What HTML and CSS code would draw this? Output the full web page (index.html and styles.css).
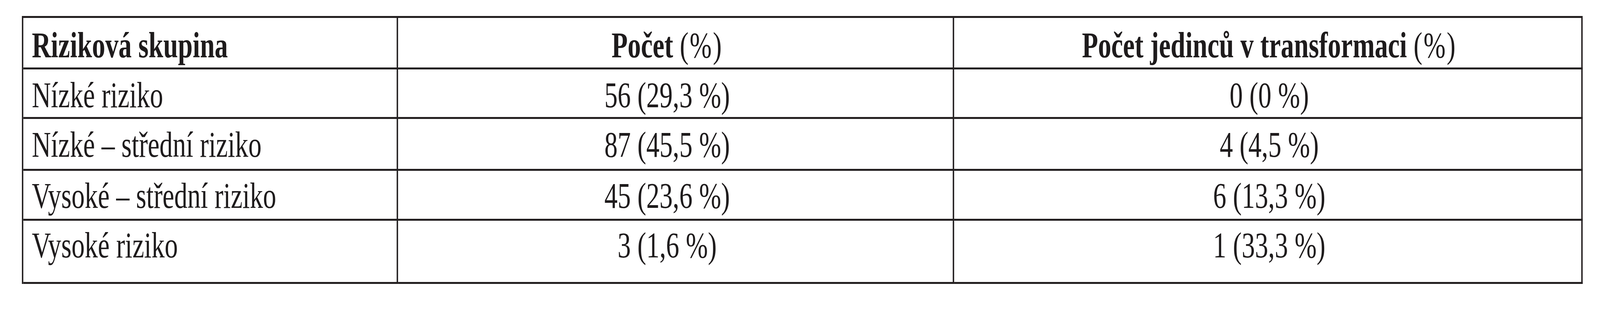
FILE: index.html
```html
<!DOCTYPE html>
<html lang="cs">
<head>
<meta charset="utf-8">
<title>Riziková skupina</title>
<link rel="stylesheet" href="styles.css">
</head>
<body>
<div class="page">
  <div class="risk-table" role="table">
    <div class="row head" role="row">
      <div class="cell c1" role="columnheader">Riziková skupina</div>
      <div class="cell c2" role="columnheader">Počet <span class="unit">(%)</span></div>
      <div class="cell c3" role="columnheader">Počet jedinců v transformaci <span class="unit">(%)</span></div>
    </div>
    <div class="row" role="row">
      <div class="cell c1" role="cell">Nízké riziko</div>
      <div class="cell c2" role="cell">56 (29,3 %)</div>
      <div class="cell c3" role="cell">0 (0 %)</div>
    </div>
    <div class="row" role="row">
      <div class="cell c1" role="cell">Nízké – střední riziko</div>
      <div class="cell c2" role="cell">87 (45,5 %)</div>
      <div class="cell c3" role="cell">4 (4,5 %)</div>
    </div>
    <div class="row" role="row">
      <div class="cell c1" role="cell">Vysoké – střední riziko</div>
      <div class="cell c2" role="cell">45 (23,6 %)</div>
      <div class="cell c3" role="cell">6 (13,3 %)</div>
    </div>
    <div class="row" role="row">
      <div class="cell c1" role="cell">Vysoké riziko</div>
      <div class="cell c2" role="cell">3 (1,6 %)</div>
      <div class="cell c3" role="cell">1 (33,3 %)</div>
    </div>
  </div>
</div>
</body>
</html>
```
FILE: styles.css
```css
html, body {
  margin: 0;
  padding: 0;
  background: #ffffff;
  overflow: hidden;
}

body {
  font-family: "Liberation Serif", "Times New Roman", serif;
  font-size: 93px;
  line-height: 93px;
  color: #1e1b1c;
}

/* The window is clamped to 4096px wide: the 5631px-wide design is fitted horizontally. */
.page {
  width: 5631px;
  height: 800px;
  padding-top: 41px;
  box-sizing: border-box;
  transform: scaleX(0.727402);
  transform-origin: 0 0;
}

.risk-table {
  display: grid;
  grid-template-columns: 1319px 1957px 2212px;
  grid-template-rows: 132px 127px 133px 128px 162px;
  width: max-content;
  margin-left: 77px;
  border-top: 5px solid #231f20;
  border-left: 5px solid #231f20;
}

.row {
  display: contents;
}

.cell {
  box-sizing: border-box;
  border-right: 5px solid #231f20;
  border-bottom: 5px solid #231f20;
  padding-top: 19px;
  white-space: nowrap;
}

.head .cell {
  font-weight: bold;
  padding-top: 23px;
}

.row:nth-child(4) .cell {
  padding-top: 17px;
}

.row:nth-child(5) .cell {
  padding-top: 16px;
}

.c1 {
  text-align: left;
  padding-left: 30px;
}

.c2 {
  text-align: center;
  padding-left: 30px;
  padding-right: 88px;
}

.c3 {
  text-align: center;
  padding-left: 11px;
}

.unit {
  font-weight: normal;
  letter-spacing: 4px;
}
```
